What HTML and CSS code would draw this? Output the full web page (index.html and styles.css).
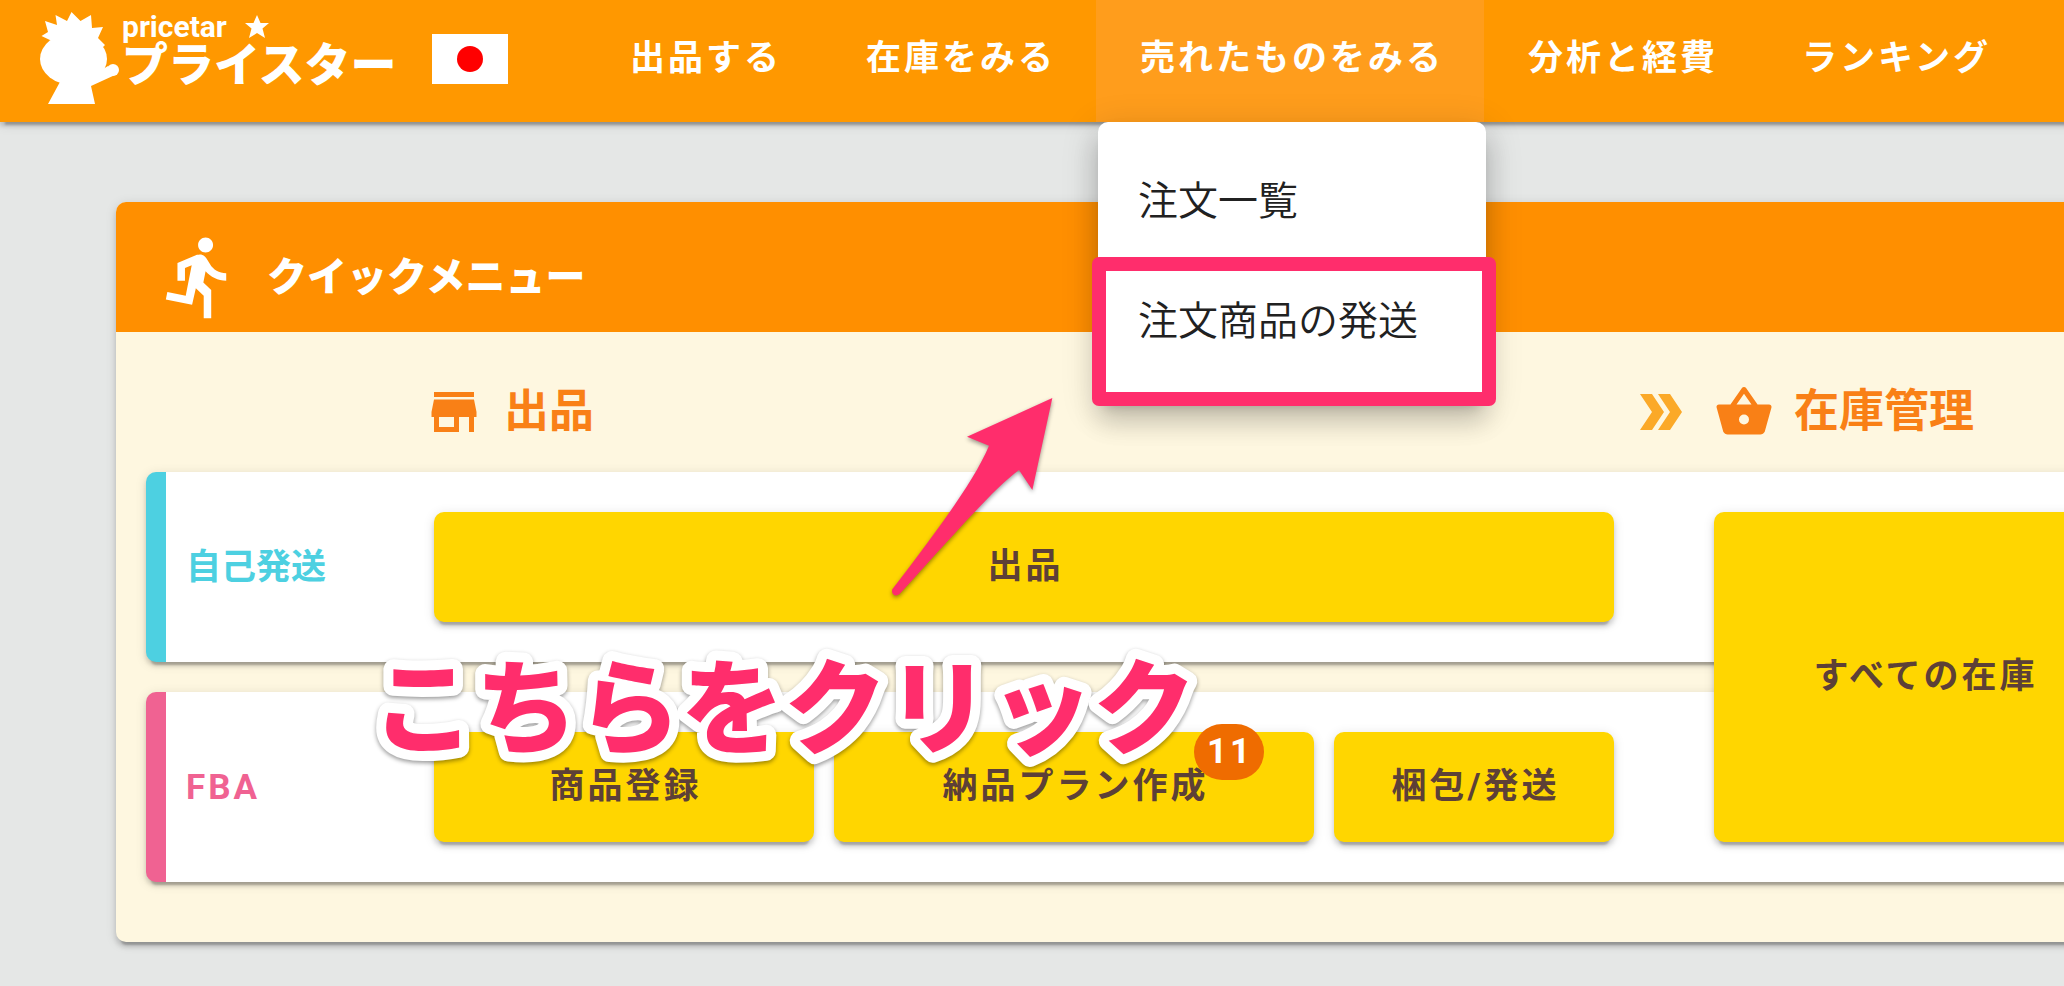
FILE: index.html
```html
<!DOCTYPE html>
<html lang="ja">
<head>
    <meta charset="UTF-8">
    <meta name="viewport" content="width=device-width, initial-scale=1.0">
    <title>プライスター</title>
    <link rel="stylesheet" href="styles.css">
</head>
<body>
    <header class="header">
        <a class="logo" href="#">
            <svg class="logo-mark" viewBox="40 12 80 92" aria-hidden="true">
                <path d="M52 41L41.500 36L48 32L45 21L57 25L55.500 15L67 21L71.500 12L80.500 21L91 15L92 28L103 27L98 38L105 45L100 50H48Z"/>
                <ellipse cx="73.500" cy="59" rx="33.500" ry="26"/>
                <path d="M61 80L48 104H95L91 86L115 75L108 66L88 78Z"/>
                <circle cx="113" cy="70" r="6"/>
            </svg>
            <span class="logo-text">
                <span class="logo-en">pricetar
                    <svg class="logo-star" viewBox="0 0 24 24" aria-hidden="true"><path d="M12 0l3.500 8H24l-6.500 5.500L20 23l-8-5-8 5 2.500-9.500L0 8h8.500z"/></svg>
                </span>
                <span class="logo-ja">プライスター</span>
            </span>
        </a>
        <button class="flag" aria-label="日本"><span class="flag-sun"></span></button>
        <nav class="nav">
            <button class="nav-item">出品する</button>
            <button class="nav-item">在庫をみる</button>
            <div class="nav-group">
                <button class="nav-item active">売れたものをみる</button>
                <div class="menu">
                    <a class="menu-item" href="#">注文一覧</a>
                    <a class="menu-item marked" href="#">注文商品の発送</a>
                </div>
            </div>
            <button class="nav-item">分析と経費</button>
            <button class="nav-item">ランキング</button>
        </nav>
    </header>

    <main class="card">
        <div class="card-header">
            <svg class="run-icon" viewBox="0 0 24 24" aria-hidden="true"><path d="M13.490 5.480c1.100 0 2-.9 2-2s-.9-2-2-2-2 .9-2 2 .9 2 2 2zm-3.600 13.900l1-4.400 2.100 2v6h2v-7.500l-2.100-2 .6-3c1.300 1.500 3.300 2.500 5.500 2.500v-2c-1.900 0-3.500-1-4.300-2.400l-1-1.600c-.4-.6-1-1-1.700-1-.3 0-.5.1-.8.1l-5.200 2.200v4.700h2v-3.400l1.800-.7-1.600 8.100-4.900-1-.4 2 7 1.400z"/></svg>
            <h1>クイックメニュー</h1>
        </div>

        <div class="card-body">
            <div class="heads">
                <h2 class="head head-sell">
                    <svg class="head-icon" viewBox="0 0 24 24" aria-hidden="true"><path d="M20 4H4v2h16V4zm1 10v-2l-1-5H4l-1 5v2h1v6h10v-6h4v6h2v-6h1zm-9 4H6v-4h6v4z"/></svg>
                    出品
                </h2>
                <svg class="chevrons" viewBox="0 0 42 36" aria-hidden="true"><path d="M0 0h12l12 18-12 18H0l12-18zM18 0h12l12 18-12 18H18l12-18z"/></svg>
                <h2 class="head">
                    <svg class="head-icon" viewBox="0 0 24 24" aria-hidden="true"><path fill-rule="evenodd" d="M5.500 21C4.720 21 4.040 20.550 3.710 19.900L1.100 10.440L1 10A1 1 0 0 1 2 9H6.580L11.180 2.430C11.360 2.170 11.660 2 12 2C12.340 2 12.650 2.170 12.830 2.440L17.420 9H22A1 1 0 0 1 23 10L22.960 10.290L20.290 19.900C19.960 20.550 19.280 21 18.500 21H5.500M12 4.740L9 9H15L12 4.740M12 13A2 2 0 0 0 10 15A2 2 0 0 0 12 17A2 2 0 0 0 14 15A2 2 0 0 0 12 13Z"/></svg>
                    在庫管理
                </h2>
            </div>

            <div class="board">
                <section class="row row-self">
                    <h3>自己発送</h3>
                    <div class="row-buttons">
                        <button class="btn">出品</button>
                    </div>
                </section>
                <section class="row row-fba">
                    <h3>FBA</h3>
                    <div class="row-buttons three">
                        <button class="btn">商品登録</button>
                        <button class="btn">納品プラン作成<span class="badge">11</span></button>
                        <button class="btn">梱包/発送</button>
                    </div>
                </section>
                <button class="btn btn-stock">すべての在庫</button>
            </div>
        </div>
    </main>

    <!-- 操作ガイド -->
    <svg class="guide-arrow" viewBox="0 0 720 720" aria-hidden="true"><path d="M577 54L321 170L387 197C340 310 210 480 97 628C92 642 106 652 118 643C240 510 400 325 477 270L517 330Z"/></svg>
    <svg class="guide-text" viewBox="0 0 860 130"><text x="12" y="98">こちらをクリック</text></svg>
</body>
</html>
```
FILE: styles.css
```css
* {
    box-sizing: border-box;
}
body {
    margin: 0;
    position: relative;
    min-height: 100vh;
    overflow-x: hidden;
    background: #e5e7e6;
    font-family: Roboto, "Noto Sans CJK JP", sans-serif;
    color: #212121;
}
h1, h2, h3 {
    margin: 0;
}
button {
    border: none;
    padding: 0;
    font-family: inherit;
    cursor: pointer;
}
a {
    color: inherit;
    text-decoration: none;
}

/* header */
.header {
    position: relative;
    z-index: 2;
    display: flex;
    height: 122px;
    margin-right: -20px;
    padding-left: 40px;
    background: #ff9800;
    box-shadow: 0 8px 2px -5px rgba(0,0,0,0.2), 0 4px 4px rgba(0,0,0,0.14), 0 2px 12px rgba(0,0,0,0.12);
}
.logo {
    display: flex;
    flex: none;
    gap: 2px;
    width: 392px;
    padding-top: 12px;
    color: white;
    white-space: nowrap;
}
.logo-mark {
    flex: none;
    width: 80px;
    height: 92px;
    fill: white;
}
.logo-text {
    display: flex;
    flex-direction: column;
}
.logo-en {
    display: flex;
    align-items: center;
    gap: 18px;
    font-size: 30px;
    font-weight: 700;
    line-height: 30px;
}
.logo-star {
    width: 24px;
    height: 24px;
    fill: white;
}
.logo-ja {
    font-size: 46px;
    font-weight: 900;
    line-height: 46px;
}
.flag {
    flex: none;
    display: flex;
    align-items: center;
    justify-content: center;
    width: 76px;
    height: 50px;
    margin-top: 34px;
    background: white;
}
.flag-sun {
    width: 26px;
    height: 26px;
    border-radius: 50%;
    background: #f00;
}
.nav {
    display: flex;
    margin-left: 78px;
}
.nav-group {
    position: relative;
}
.nav-item {
    height: 122px;
    padding: 0 40px 14px 44px;
    background: none;
    color: white;
    font-size: 35px;
    font-weight: 700;
    letter-spacing: 3px;
    white-space: nowrap;
}
.nav-item.active {
    background: #ff9d1c;
}
.menu {
    position: absolute;
    top: 122px;
    left: 2px;
    width: 100%;
    padding: 20px 0;
    border-radius: 10px;
    background: white;
    box-shadow: 0 12px 12px -8px rgba(0,0,0,0.2), 0 20px 25px 2px rgba(0,0,0,0.14), 0 8px 35px 5px rgba(0,0,0,0.12);
}
.menu-item {
    position: relative;
    display: block;
    padding-left: 40px;
    font-size: 40px;
    font-weight: 350;
    line-height: 120px;
    white-space: nowrap;
}
.menu-item.marked::after {
    content: "";
    position: absolute;
    inset: -5px -10px -24px -6px;
    border: 14px solid #ff2d6c;
    border-radius: 7px;
}

/* quick menu */
.card {
    margin: 80px -100px 44px 116px;
    border-radius: 10px;
    background: #fef7e0;
    box-shadow: 0 8px 2px -5px rgba(0,0,0,0.2), 0 5px 5px rgba(0,0,0,0.14), 0 2px 12px rgba(0,0,0,0.12);
}
.card-header {
    display: flex;
    align-items: center;
    gap: 22px;
    height: 130px;
    padding: 20px 39px 0;
    border-radius: 10px 10px 0 0;
    background: #ff8f00;
    color: white;
}
.run-icon {
    width: 90px;
    height: 90px;
    fill: white;
}
h1 {
    padding-bottom: 6px;
    font-size: 40px;
    font-weight: 900;
}
.card-body {
    padding: 50px 30px 60px;
}
.heads {
    display: grid;
    grid-template-columns: 278px 1fr 74px 420px;
    align-items: center;
    height: 60px;
    margin-bottom: 30px;
}
.head {
    display: flex;
    align-items: center;
    gap: 20px;
    color: #f98016;
    font-size: 45px;
    font-weight: 700;
    line-height: 60px;
}
.head-sell {
    grid-column: 2;
}
.head-icon {
    width: 60px;
    height: 60px;
    fill: #f98016;
}
.chevrons {
    width: 42px;
    height: 36px;
    fill: #fba928;
}
.board {
    display: grid;
    grid-template-columns: 1fr 420px;
    grid-template-rows: 190px 190px;
    row-gap: 30px;
}
.row {
    grid-column: 1 / 3;
    display: grid;
    grid-template-columns: 248px 1fr;
    align-items: center;
    padding: 0 520px 0 20px;
    border-left: 20px solid;
    border-radius: 10px;
    background: white;
    box-shadow: 0 8px 2px -5px rgba(0,0,0,0.2), 0 4px 4px rgba(0,0,0,0.14), 0 2px 12px rgba(0,0,0,0.12);
}
.row-self {
    grid-row: 1;
    border-color: #4dd0e1;
}
.row-fba {
    grid-row: 2;
    border-color: #f06292;
}
h3 {
    font-size: 35px;
    font-weight: 700;
}
.row-self h3 {
    padding-bottom: 8px;
    color: #4dd0e1;
}
.row-fba h3 {
    color: #f06292;
    letter-spacing: 3px;
}
.row-buttons {
    display: grid;
    gap: 20px;
}
.row-buttons.three {
    grid-template-columns: 19fr 24fr 14fr;
}
.btn {
    position: relative;
    height: 110px;
    padding: 0 0 10px 3px;
    border-radius: 10px;
    background: #ffd600;
    box-shadow: 0 8px 2px -5px rgba(0,0,0,0.2), 0 5px 5px rgba(0,0,0,0.14), 0 2px 12px rgba(0,0,0,0.12);
    color: #5d4037;
    font-size: 35px;
    font-weight: 700;
    letter-spacing: 3px;
    white-space: nowrap;
}
.btn-stock {
    grid-column: 2;
    grid-row: 1 / 3;
    height: auto;
    margin: 40px 0;
}
.badge {
    position: absolute;
    top: -8px;
    right: 50px;
    width: 70px;
    height: 56px;
    padding-left: 2px;
    border-radius: 28px;
    background: #ef6c00;
    color: white;
    line-height: 56px;
}

/* guide */
.guide-arrow {
    position: absolute;
    z-index: 3;
    top: 380px;
    left: 860px;
    width: 240px;
    height: 240px;
    fill: #ff2d6c;
    filter: drop-shadow(0 2px 2px rgba(0,0,0,0.4));
}
.guide-text {
    position: absolute;
    z-index: 3;
    top: 648px;
    left: 360px;
    width: 860px;
    height: 130px;
    font-size: 103px;
    font-weight: 900;
    fill: #ff2d6c;
    stroke: white;
    stroke-width: 20px;
    stroke-linejoin: round;
    paint-order: stroke;
    filter: drop-shadow(0 2px 2px rgba(0,0,0,0.4));
}
```
